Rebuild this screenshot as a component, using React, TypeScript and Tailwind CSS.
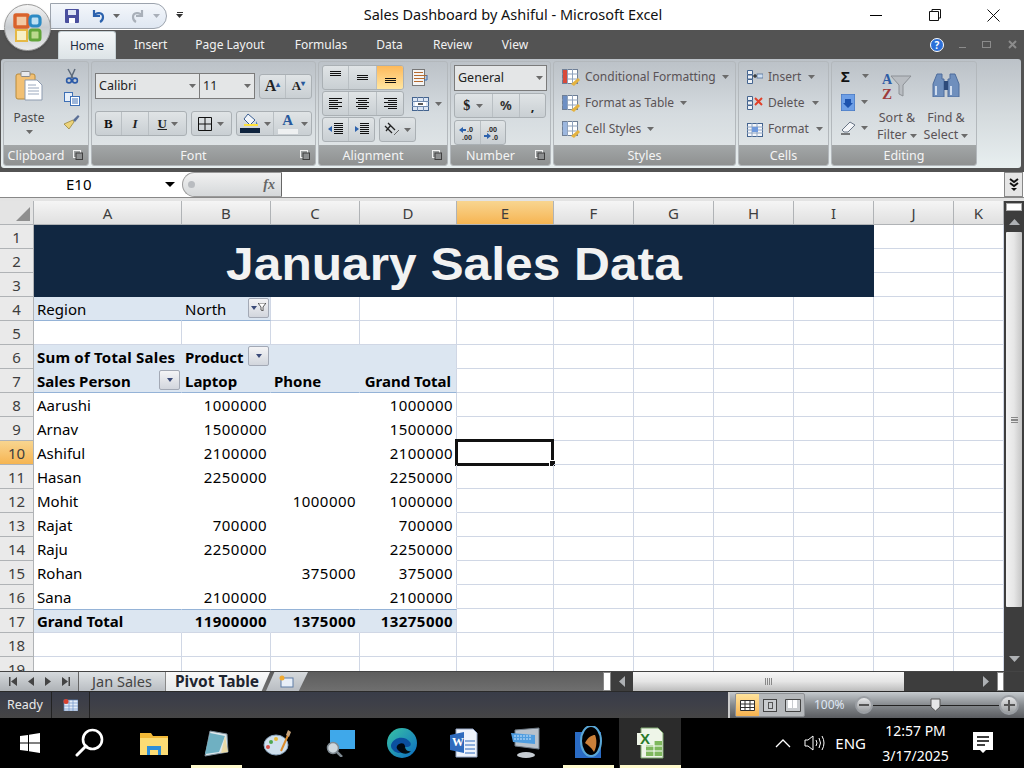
import React from "react";

const Caret = ({ c = "#6b6b6b", className = "" }: { c?: string; className?: string }) => (
  <svg width="7" height="4" viewBox="0 0 7 4" className={className}><path d="M0 0h7L3.5 4z" fill={c} /></svg>
);

const Launcher = () => (
  <svg width="10" height="10" viewBox="0 0 10 10" className="shrink-0">
    <rect x="0.5" y="0.5" width="7" height="7" fill="none" stroke="#f2f2f2" />
    <rect x="3" y="3" width="6.5" height="6.5" fill="#8d8f90" stroke="#3f3f3f" strokeWidth="1" />
  </svg>
);

const Group = ({ w, label, launcher, children }: { w: string; label: string; launcher?: boolean; children: React.ReactNode }) => (
  <div className={`${w} h-[105px] shrink-0 flex flex-col rounded-[3px] border border-[#b3b8bc] bg-gradient-to-b from-[#bcc2c8] via-[#d5dbdf] to-[#e4e9ea] overflow-hidden`}>
    <div className="flex-1 min-h-0 relative">{children}</div>
    <div className="h-[20px] shrink-0 bg-gradient-to-b from-[#a3a7a8] to-[#8f9191] flex items-center text-[#f4f4f4] text-[12.5px] relative pt-[2px]">
      <span className={`flex-1 text-center ${launcher ? "pr-[20px]" : ""}`}>{label}</span>
      {launcher && <span className="absolute right-[5px] top-[5px]"><Launcher /></span>}
    </div>
  </div>
);

const BtnRow = ({ children, className = "" }: { children: React.ReactNode; className?: string }) => (
  <div className={`flex h-[25px] rounded-[3px] border border-[#aab0b4] bg-gradient-to-b from-[#e0e4e6] to-[#c9cfd3] overflow-hidden ${className}`}>{children}</div>
);
const Seg = ({ w, children, active }: { w: string; children?: React.ReactNode; active?: boolean }) => (
  <div className={`${w} flex items-center justify-center border-r border-[#b9bfc3] last:border-r-0 ${active ? "bg-gradient-to-b from-[#fdb95a] to-[#ffe6a0]" : ""}`}>{children}</div>
);

const HL = ({ w, x, y }: { w: number[]; x: (n: number) => number; y: number }) => (
  <svg width="15" height="13" viewBox="0 0 15 13">
    {w.map((n, i) => <rect key={i} x={Math.floor(x(n))} y={y + i * 2} width={n} height="1" fill="#111" />)}
  </svg>
);

const Cut = () => (
  <svg width="14" height="16" viewBox="0 0 14 16"><path d="M3 1l5 9M10 1L6 10" stroke="#5d6a7a" strokeWidth="1.5" fill="none" /><circle cx="4" cy="12.5" r="2.4" fill="none" stroke="#2b5aa8" strokeWidth="1.6" /><circle cx="10" cy="12.5" r="2.4" fill="none" stroke="#2b5aa8" strokeWidth="1.6" /></svg>
);
const CopyI = () => (
  <svg width="16" height="14" viewBox="0 0 16 14"><rect x="0.5" y="0.5" width="8" height="9" fill="#e8f0fa" stroke="#3d6fb5" /><rect x="6.5" y="4.5" width="9" height="9" fill="#fff" stroke="#3d6fb5" /><path d="M8 7h6M8 9h6M8 11h6" stroke="#3d6fb5" /></svg>
);
const Brush = () => (
  <svg width="17" height="16" viewBox="0 0 17 16"><path d="M10 6L1 10l5 5 5-7z" fill="#ecd37a" stroke="#8f7b30" strokeWidth=".7" /><path d="M10 6l5-5 1.500 1.500L12 8z" fill="#5a6f96" /></svg>
);
const PasteI = () => (
  <svg width="28" height="32" viewBox="0 0 28 32">
    <rect x="1" y="3" width="19" height="25" rx="2" fill="#f2c073" stroke="#b88a3a" />
    <rect x="6" y="0.5" width="9" height="5" rx="1" fill="#e8eaee" stroke="#8a8a8a" />
    <path d="M10 9h12l5 5v15H10z" fill="#fff" stroke="#8d9bb0" />
    <path d="M13 14h8M13 17h11M13 20h11M13 23h11" stroke="#9aa8bd" />
  </svg>
);
const Borders = () => (
  <svg width="14" height="14" viewBox="0 0 14 14"><path d="M.5.5h13v13H.5zM7 .5v13M.5 7h13" fill="none" stroke="#111" /></svg>
);
const Fill = () => (
  <svg width="21" height="21" viewBox="0 0 21 21"><path d="M8 1l7 6-5 5-6-6z" fill="#f2f6fb" stroke="#3c5f92" /><path d="M16 8c1 2 2 3 1.500 4s-2 0-1.500-4z" fill="#4a7ec0" /><rect x="4" y="11" width="14" height="2" fill="#ffe33b" /><rect x="0" y="15" width="20" height="5" fill="#0f243e" /></svg>
);
const FontColor = () => (
  <div className="flex flex-col items-center leading-none">
    <span className="text-[#27589b] font-bold text-[15px] leading-[14px] [font-family:'Liberation_Serif',serif]">A</span>
    <span className="w-[20px] h-[5px] bg-[#eef0f1] mt-[2px]" />
  </div>
);

const Sheet = ({ c }: { c: string }) => (
  <svg width="19" height="17" viewBox="0 0 19 17">
    <rect x="0.5" y="0.5" width="15" height="14" fill="#fff" stroke="#6f7f96" />
    <path d="M0 5h16M0 10h16M5.500 0v15M10.500 0v15" stroke="#8fa2bc" />
    <rect x="1" y="1" width="4" height="13" fill={c} />
    <path d="M9 15l7-6 2 2-6 6z" fill="#e4b23f" />
  </svg>
);

const TabLabel = ({ children, w }: { children: string; w: string }) => <div className={`${w} text-center text-[#f2f2f2] text-[12px] leading-[29px]`}>{children}</div>;

const COLS = "grid-cols-[34px_148px_89px_89px_97px_97px_80px_80px_80px_80px_80px_50px]";
const letters = ["A", "B", "C", "D", "E", "F", "G", "H", "I", "J", "K"];

type R = { n: number; a?: string; b?: string; c?: string; d?: string };
const rows: R[] = [
  { n: 8, a: "Aarushi", b: "1000000", d: "1000000" },
  { n: 9, a: "Arnav", b: "1500000", d: "1500000" },
  { n: 10, a: "Ashiful", b: "2100000", d: "2100000" },
  { n: 11, a: "Hasan", b: "2250000", d: "2250000" },
  { n: 12, a: "Mohit", c: "1000000", d: "1000000" },
  { n: 13, a: "Rajat", b: "700000", d: "700000" },
  { n: 14, a: "Raju", b: "2250000", d: "2250000" },
  { n: 15, a: "Rohan", c: "375000", d: "375000" },
  { n: 16, a: "Sana", b: "2100000", d: "2100000" },
];

const Cell = ({ children, className = "", right }: { children?: React.ReactNode; className?: string; right?: boolean }) => (
  <div className={`relative min-w-0 h-[24px] border-r border-b border-[#d0d7e5] px-[3px] text-[15px] leading-[25px] whitespace-nowrap text-black ${right ? "text-right tracking-[0.45px]" : ""} ${className}`}>{children}</div>
);
const Head = ({ n, active }: { n: number; active?: boolean }) => (
  <div className={`h-[24px] border-r border-b border-[#b0b3b6] text-center text-[15px] leading-[25px] text-[#3e3e3e] ${active ? "bg-gradient-to-b from-[#f8d58f] to-[#f6b551]" : "bg-[#eaeaea]"}`}>{n}</div>
);
const Blanks = ({ n }: { n: number }) => <>{Array.from({ length: n }).map((_, i) => <Cell key={i} />)}</>;

const DropBtn = ({ filter }: { filter?: boolean }) => (
  <span className="absolute right-[1px] top-[1px] w-[21px] h-[20px] rounded-[2px] border border-[#a3a9b5] bg-gradient-to-b from-[#f4f4f6] to-[#d2d6dd] flex items-center justify-center gap-[1px]">
    <svg width="6" height="4" viewBox="0 0 6 4"><path d="M0 0h6L3 4z" fill="#3b4a78" /></svg>
    {filter && <svg width="8" height="8" viewBox="0 0 8 8" className="-mt-[3px]"><path d="M0 0h8L5 4v4L3 7V4z" fill="#fff" stroke="#333" strokeWidth=".8" /></svg>}
  </span>
);

const Under = ({ w = "w-[62px]", active, children }: { w?: string; active?: boolean; children: React.ReactNode }) => (
  <div className={`${w} h-[50px] shrink-0 flex items-center justify-center relative ${active ? "bg-[#2b2b2b]" : ""}`}>
    {children}
  </div>
);

export default function App() {
  return (
    <div className="w-[1024px] h-[768px] overflow-hidden flex flex-col bg-[#535353] [font-family:'Noto_Sans',sans-serif]">
      {/* Title bar */}
      <div className="h-[30px] bg-white flex items-center shrink-0 relative">
        <div className="ml-[50px] w-[117px] h-[26px] mt-[2px] rounded-r-[13px] border border-[#9ca3ad] bg-gradient-to-b from-[#f4f7fb] to-[#dfe7f2] flex items-center pl-[14px] gap-[8px]">
          <svg width="14" height="14" viewBox="0 0 14 14"><rect width="14" height="14" rx="1" fill="#4a4f9e" /><rect x="3" y="1" width="8" height="5" fill="#dfe5f5" /><rect x="4" y="9" width="6" height="5" fill="#fff" /></svg>
          <svg width="14" height="14" viewBox="0 0 14 14" className="ml-[4px]"><path d="M3 1v6h6M3 7c2-4 9-4 9 1 0 2-1 4-3 5" fill="none" stroke="#2c62ad" strokeWidth="2.200" /></svg>
          <Caret c="#666" />
          <svg width="14" height="14" viewBox="0 0 14 14" className="ml-[3px]"><path d="M11 1v6H5M11 7C9 3 2 3 2 8c0 2 1 4 3 5" fill="none" stroke="#a9b0b9" strokeWidth="2.200" /></svg>
          <Caret c="#a9afb8" />
        </div>
        <div className="ml-[9px] flex flex-col items-center gap-[1px]"><span className="w-[6px] h-[1px] bg-[#333]" /><Caret c="#333" /></div>
        <div className="flex-1 text-center text-[14.5px] text-[#111] -ml-[4px] whitespace-nowrap">Sales Dashboard by Ashiful - Microsoft Excel</div>
        <div className="flex items-center shrink-0">
          <div className="w-[58px] flex justify-center"><span className="w-[12px] h-[1px] bg-black" /></div>
          <div className="w-[59px] flex justify-center">
            <svg width="12" height="12" viewBox="0 0 12 12"><path d="M3 2.500V.5h8.500V9H9.500M.5 2.500h9v9h-9z" fill="none" stroke="#111" /></svg>
          </div>
          <div className="w-[58px] flex justify-center mr-[2px]">
            <svg width="13" height="13" viewBox="0 0 13 13"><path d="M.5.5l12 12M12.500.5l-12 12" stroke="#111" /></svg>
          </div>
        </div>
        {/* Office button */}
        <div className="absolute left-[4px] top-[4px] w-[47px] h-[47px] rounded-full bg-gradient-to-b from-[#f5f5f5] via-[#c8ccd0] to-[#e9e9e9] border border-[#9a9a9a] flex items-center justify-center z-10 shadow">
          <svg width="30" height="30" viewBox="0 0 30 30">
            <rect x="2" y="2" width="13" height="12" rx="1" fill="#f3c9a3" stroke="#d9622b" strokeWidth="3.400" />
            <rect x="17" y="3" width="10" height="10" rx="3" fill="#bfe0f2" stroke="#2c8ac4" strokeWidth="3.200" />
            <rect x="3" y="17" width="11" height="11" fill="#f7f0c6" stroke="#e6b844" strokeWidth="2" />
            <rect x="17" y="17" width="10" height="10" rx="2" fill="#bcd98e" stroke="#62a53a" strokeWidth="3" />
          </svg>
        </div>
      </div>

      {/* Ribbon tabs */}
      <div className="h-[29px] shrink-0 bg-[#535353] flex items-end pl-[58px] relative">
        <div className="w-[58px] h-[28px] rounded-t-[3px] bg-gradient-to-b from-[#f4f7f8] to-[#dde4e7] text-center text-[12px] leading-[28px] text-[#1c2a40] border border-b-0 border-[#c5d0d4]">Home</div>
        <div className="flex h-[29px]">
          <TabLabel w="w-[33px] ml-[18px]">Insert</TabLabel>
          <TabLabel w="w-[72px] ml-[27px]">Page Layout</TabLabel>
          <TabLabel w="w-[54px] ml-[28px]">Formulas</TabLabel>
          <TabLabel w="w-[27px] ml-[28px]">Data</TabLabel>
          <TabLabel w="w-[41px] ml-[29px]">Review</TabLabel>
          <TabLabel w="w-[28px] ml-[28px]">View</TabLabel>
        </div>
        <div className="ml-auto flex items-center h-full gap-[13px] pr-[7px]">
          <span className="w-[14px] h-[14px] rounded-full bg-[#2c6fd8] border border-white text-white text-[10px] font-bold leading-[12px] text-center">?</span>
          <span className="w-[7px] h-[1px] bg-[#8c8c8c] mt-[6px] ml-[2px]" />
          <span className="w-[9px] h-[7px] border border-[#8c8c8c] ml-[3px]" />
          <svg width="9" height="9" viewBox="0 0 9 9" className="ml-[4px]"><path d="M1 1l7 7M8 1L1 8" stroke="#8c8c8c" strokeWidth="2" /></svg>
        </div>
      </div>

      {/* Ribbon */}
      <div className="h-[109px] shrink-0 bg-gradient-to-b from-[#bcc2c8] via-[#d4dadd] to-[#e8eff0] ml-[1px] mr-[3px] rounded-[3px] pt-[2px] pl-[2px] flex gap-[2px]">
        <Group w="w-[86px]" label="Clipboard" launcher>
          <div className="flex h-full">
            <div className="w-[50px] flex flex-col items-center pt-[9px]">
              <PasteI />
              <span className="text-[12px] text-[#4a4a4a] mt-[7px] leading-[16px]">Paste</span>
              <Caret className="mt-[4px]" />
            </div>
            <div className="flex-1 flex flex-col items-center gap-[8px] pt-[6px] pl-[1px]">
              <Cut /><CopyI /><Brush />
            </div>
          </div>
        </Group>
        <Group w="w-[225px]" label="Font" launcher>
          <div className="px-[3px] pt-[11px] flex flex-col gap-[12px]">
            <div className="flex items-center">
              <div className="w-[105px] h-[26px] border border-[#7b7b7b] bg-[#e4e6e7] flex items-center justify-between px-[3px] text-[12.5px] text-[#222]">Calibri<Caret /></div>
              <div className="w-[55px] h-[26px] border border-l-0 border-[#7b7b7b] bg-[#e4e6e7] flex items-center justify-between px-[3px] text-[12.5px] text-[#222]">11<Caret /></div>
              <BtnRow className="ml-[4px]">
                <Seg w="w-[26px]"><span className="[font-family:'Liberation_Serif',serif] font-bold text-[16px] text-[#222]">A<sup className="text-[#27589b] text-[8px]">▴</sup></span></Seg>
                <Seg w="w-[25px]"><span className="[font-family:'Liberation_Serif',serif] font-bold text-[13px] text-[#222]">A<sup className="text-[#27589b] text-[8px]">▾</sup></span></Seg>
              </BtnRow>
            </div>
            <div className="flex items-center gap-[4px]">
              <BtnRow>
                <Seg w="w-[26px]"><span className="[font-family:'Liberation_Serif',serif] font-bold text-[13px] text-[#111]">B</span></Seg>
                <Seg w="w-[28px]"><span className="[font-family:'Liberation_Serif',serif] font-bold italic text-[13px] text-[#222]">I</span></Seg>
                <Seg w="w-[37px]"><span className="[font-family:'Liberation_Serif',serif] font-bold underline text-[13px] text-[#222] mr-[4px]">U</span><Caret /></Seg>
              </BtnRow>
              <BtnRow><Seg w="w-[39px]"><div className="flex items-center gap-[5px]"><Borders /><Caret /></div></Seg></BtnRow>
              <BtnRow>
                <Seg w="w-[38px]"><div className="flex items-center gap-[3px]"><Fill /><Caret /></div></Seg>
                <Seg w="w-[37px]"><div className="flex items-center gap-[3px]"><FontColor /><Caret /></div></Seg>
              </BtnRow>
            </div>
          </div>
        </Group>
        <Group w="w-[130px]" label="Alignment" launcher>
          <div className="pl-[3px] pt-[3px] flex flex-col gap-[1px]">
            <div className="flex items-center gap-[8px]">
              <BtnRow>
                <Seg w="w-[26px]"><HL w={[11, 11, 11]} x={() => 2} y={0} /></Seg>
                <Seg w="w-[28px]"><HL w={[11, 11, 11]} x={() => 2} y={4} /></Seg>
                <Seg w="w-[26px]" active><HL w={[11, 11, 11]} x={() => 2} y={7} /></Seg>
              </BtnRow>
              <svg width="17" height="17" viewBox="0 0 17 17"><rect x=".5" y=".5" width="12" height="16" fill="#f4f4f4" stroke="#777" /><path d="M2 3.500h9M2 6.500h13M2 9.500h11M2 12.500h9" stroke="#b66a2e" /><path d="M15 6v5h-3" fill="none" stroke="#3b6fb5" /></svg>
            </div>
            <div className="flex items-center gap-[8px]">
              <BtnRow>
                <Seg w="w-[26px]"><HL w={[13, 9, 13, 9, 13, 9]} x={() => 1} y={1} /></Seg>
                <Seg w="w-[28px]"><HL w={[13, 9, 13, 9, 13, 9]} x={(n) => (15 - n) / 2} y={1} /></Seg>
                <Seg w="w-[26px]"><HL w={[13, 9, 13, 9, 13, 9]} x={(n) => 14 - n} y={1} /></Seg>
              </BtnRow>
              <div className="flex items-center gap-[6px]">
                <svg width="17" height="14" viewBox="0 0 17 14"><rect x=".5" y=".5" width="16" height="13" fill="#dbe5f3" stroke="#44648f" /><path d="M0 4.500h17M0 9.500h17M5.500 0v4M11.500 0v4M5.500 9v5M11.500 9v5" stroke="#6f89ad" /><rect x="3" y="5" width="11" height="4" fill="#fff" /><path d="M6 7h5" stroke="#222" strokeWidth="1.500" /></svg>
                <Caret />
              </div>
            </div>
            <div className="flex items-center gap-[4px]">
              <BtnRow>
                <Seg w="w-[26px]"><svg width="15" height="13" viewBox="0 0 15 13"><path d="M6 .5h9M6 2.500h9M6 4.500h9M6 6.500h9M6 8.500h9M6 10.500h9" stroke="#111" /><path d="M0 6l4-3v6z" fill="#2c62ad" /></svg></Seg>
                <Seg w="w-[25px]"><svg width="15" height="13" viewBox="0 0 15 13"><path d="M6 .5h9M6 2.500h9M6 4.500h9M6 6.500h9M6 8.500h9M6 10.500h9" stroke="#111" /><path d="M5 6L1 3v6z" fill="#2c62ad" /></svg></Seg>
              </BtnRow>
              <BtnRow><Seg w="w-[35px]"><div className="flex items-center gap-[4px]"><svg width="16" height="15" viewBox="0 0 16 15"><path d="M1 4l7 7M4 1l7 7M2 9l5-6" stroke="#222" strokeWidth="1.300" /><path d="M10 13l5-5" stroke="#666" /></svg><Caret /></div></Seg></BtnRow>
            </div>
          </div>
        </Group>
        <Group w="w-[101px]" label="Number" launcher>
          <div className="pl-[3px] pt-[3px] flex flex-col gap-[2px]">
            <div className="w-[93px] h-[26px] border border-[#7b7b7b] bg-[#e4e6e7] flex items-center justify-between px-[3px] text-[12.5px] text-[#222]">General<Caret /></div>
            <BtnRow className="w-[92px]">
              <Seg w="w-[38px]"><span className="text-[14px] font-bold text-[#222] [font-family:'Liberation_Serif',serif] mr-[6px]">$</span><Caret /></Seg>
              <Seg w="w-[28px]"><span className="text-[13px] font-bold text-[#333]">%</span></Seg>
              <Seg w="w-[25px]"><span className="text-[13px] font-bold text-[#222] leading-[10px]">,</span></Seg>
            </BtnRow>
            <BtnRow className="w-[52px]">
              <Seg w="w-[26px]"><svg width="17" height="16" viewBox="0 0 17 16"><path d="M0 5l4-3v2h3v2H4v2z" fill="#2c62ad" /><text x="8" y="7" fontSize="7" fontWeight="bold" fill="#333">.0</text><text x="3" y="15" fontSize="7" fontWeight="bold" fill="#333">.00</text></svg></Seg>
              <Seg w="w-[25px]"><svg width="17" height="16" viewBox="0 0 17 16"><text x="3" y="7" fontSize="7" fontWeight="bold" fill="#333">.00</text><path d="M0 10h3V8l4 3-4 3v-2H0z" fill="#2c62ad" /><text x="8" y="15" fontSize="7" fontWeight="bold" fill="#333">.0</text></svg></Seg>
            </BtnRow>
          </div>
        </Group>
        <Group w="w-[183px]" label="Styles">
          <div className="pl-[8px] pt-[2px] flex flex-col text-[12px] text-[#5a5356]">
            {[["Conditional Formatting", "#d84a3a"], ["Format as Table", "#6d8fc4"], ["Cell Styles", "#9cb7df"]].map(([t, c]) => (
              <div key={t} className="h-[26px] flex items-center gap-[3px]">
                <Sheet c={c} /><span className="ml-[1px]">{t}</span><Caret className="ml-[3px]" />
              </div>
            ))}
          </div>
        </Group>
        <Group w="w-[91px]" label="Cells">
          <div className="pl-[8px] pt-[2px] flex flex-col text-[12px] text-[#5a5356]">
            {[
              ["Insert", <svg key="i" width="16" height="14" viewBox="0 0 16 14"><path d="M.5.5h5v4h-5zM.5 5h5v4h-5zM.5 9.500h5v4h-5z" fill="#eef2f7" stroke="#44648f" /><rect x="10" y="4" width="6" height="4" fill="#cfe0f4" stroke="#44648f" strokeWidth=".7" /><path d="M6 6h4M8 4v4" stroke="#111" /></svg>],
              ["Delete", <svg key="d" width="16" height="14" viewBox="0 0 16 14"><path d="M.5.5h5v4h-5zM.5 5h5v4h-5zM.5 9.500h5v4h-5z" fill="#eef2f7" stroke="#44648f" /><path d="M8 2l7 7M15 2L8 9" stroke="#e0402a" strokeWidth="2" /></svg>],
              ["Format", <svg key="f" width="16" height="16" viewBox="0 0 16 16"><rect x=".5" y="2.500" width="15" height="13" fill="#f5f7fb" stroke="#44648f" /><path d="M0 6h16M0 9h16M0 12h16M5 2v14M10 2v14" stroke="#8ea4c2" /><rect x="5" y="6" width="6" height="5" fill="#6f9ade" /></svg>],
            ].map(([t, ic]) => (
              <div key={t as string} className="h-[26px] flex items-center gap-[5px]">
                <span className="w-[16px] flex justify-center">{ic}</span><span>{t}</span><Caret className="ml-[2px]" />
              </div>
            ))}
          </div>
        </Group>
        <Group w="w-[146px]" label="Editing">
          <div className="flex h-full text-[12.5px] text-[#5a5356]">
            <div className="w-[40px] shrink-0 pt-[1px] pl-[9px] flex flex-col">
              <div className="h-[26px] flex items-center gap-[8px]"><span className="text-[15px] font-bold text-[#111] leading-none w-[13px]">Σ</span><Caret /></div>
              <div className="h-[26px] flex items-center gap-[6px]"><svg width="14" height="17" viewBox="0 0 14 17"><rect width="14" height="17" fill="#6e9fe6" stroke="#3e6cb4" /><path d="M4 5h6v4h2l-5 5-5-5h2z" fill="#1d53ae" /></svg><Caret /></div>
              <div className="h-[26px] flex items-center gap-[5px]"><svg width="15" height="14" viewBox="0 0 15 14"><path d="M1 9l8-8 5 3-7 7H3z" fill="#f3f5f8" stroke="#6a7687" /><path d="M0 13h9" stroke="#111" /></svg><Caret /></div>
            </div>
            <div className="w-[50px] shrink-0 flex flex-col items-center pt-[9px]">
              <svg width="32" height="30" viewBox="0 0 32 30">
                <text x="1" y="13" fontSize="14" fontWeight="bold" fill="#2f5da5" fontFamily="Liberation Serif">A</text>
                <text x="1" y="28" fontSize="15" fontWeight="bold" fill="#9d3b3b" fontFamily="Liberation Serif">Z</text>
                <path d="M10 5h20l-8 9v11l-4-2v-9z" fill="#b9bdc2" stroke="#8d9196" />
              </svg>
              <div className="text-center leading-[17px] mt-[8px] whitespace-nowrap">Sort &amp;<br />Filter <Caret className="inline align-middle" /></div>
            </div>
            <div className="w-[48px] shrink-0 flex flex-col items-center pt-[10px]">
              <svg width="28" height="25" viewBox="0 0 28 25">
                <path d="M5 2h5v5h2v18H1V12zM18 2h5l4 10v13H16V7h2z" fill="#6f8fbd" stroke="#4e6d9c" />
                <rect x="12" y="9" width="4" height="9" fill="#2d4a7a" />
                <path d="M4 14v9M19 14v9" stroke="#cfdcee" strokeWidth="2" />
              </svg>
              <div className="text-center leading-[17px] mt-[12px] whitespace-nowrap">Find &amp;<br />Select <Caret className="inline align-middle" /></div>
            </div>
          </div>
        </Group>
      </div>

      {/* Formula bar */}
      <div className="h-[26px] shrink-0 mt-[4px] bg-white border-b border-[#888] flex items-stretch">
        <div className="w-[182px] flex items-center text-[15px] text-black relative">
          <span className="ml-[66px]">E10</span>
          <svg width="10" height="5" viewBox="0 0 10 5" className="absolute left-[165px] top-[10px]"><path d="M0 0h10L5 5z" fill="#000" /></svg>
        </div>
        <div className="w-[100px] rounded-l-[13px] border border-[#9a9a9a] border-r-[#666] bg-gradient-to-b from-[#f1f1f1] to-[#d5d8da] flex items-center justify-between pl-[5px] pr-[6px]">
          <span className="w-[7px] h-[7px] rounded-full bg-[#b9bcc0]" />
          <span className="[font-family:'Liberation_Serif',serif] italic font-bold text-[14px] text-[#666]">fx</span>
        </div>
        <div className="flex-1" />
        <div className="w-[19px] mr-[1px] bg-[#e5e5e5] border border-[#888] flex items-center justify-center">
          <svg width="10" height="14" viewBox="0 0 10 14"><path d="M1 1l4 3 4-3M1 5l4 3 4-3" fill="none" stroke="#111" strokeWidth="2" /><path d="M2 10h6l-3 3z" fill="#111" /></svg>
        </div>
      </div>

      {/* Sheet */}
      <div className="h-[473px] shrink-0 flex bg-white border-t-[3px] border-[#e3e3e3]">
        <div className="w-[1004px] h-[470px] overflow-hidden shrink-0">
          <div className={`grid ${COLS} auto-rows-[24px]`}>
            <div className="h-[24px] bg-[#e4e4e4] border-r border-b border-[#b0b3b6] flex items-end justify-end p-[3px]">
              <svg width="14" height="14" viewBox="0 0 14 14"><path d="M14 0v14H0z" fill="#8f8f8f" /></svg>
            </div>
            {letters.map((l) => (
              <div key={l} className={`h-[24px] border-r border-b border-[#b0b3b6] text-center text-[15px] leading-[25px] text-[#3e3e3e] ${l === "E" ? "bg-gradient-to-b from-[#f8d58f] to-[#f6b551]" : "bg-gradient-to-b from-[#f5f5f5] to-[#e0e0e0]"}`}>{l}</div>
            ))}

            {/* 1-3 */}
            <Head n={1} />
            <div className="col-span-9 row-span-3 bg-[#112741] flex items-center justify-center text-[#f2f2f2] font-bold text-[46px] [font-family:'Liberation_Sans',sans-serif] leading-none pt-[6px] overflow-hidden">
              <span className="inline-block scale-x-[1.08] whitespace-nowrap">January Sales Data</span>
            </div>
            <Cell /><Cell />
            <Head n={2} /><Cell /><Cell />
            <Head n={3} /><Cell /><Cell />

            {/* 4 */}
            <Head n={4} />
            <Cell className="bg-[#dce6f1] !border-r-[#dce6f1] !border-b-[#95b3d7]">Region</Cell>
            <Cell className="bg-[#dce6f1] !border-b-[#95b3d7]">North<DropBtn filter /></Cell>
            <Blanks n={9} />

            {/* 5 */}
            <Head n={5} /><Blanks n={11} />

            {/* 6 */}
            <Head n={6} />
            <Cell className="bg-[#dce6f1] !border-[#dce6f1] font-bold tracking-[0.2px]">Sum of Total Sales</Cell>
            <Cell className="bg-[#dce6f1] !border-[#dce6f1] font-bold">Product<DropBtn /></Cell>
            <Cell className="bg-[#dce6f1] !border-[#dce6f1]" />
            <Cell className="bg-[#dce6f1] !border-b-[#dce6f1]" />
            <Blanks n={7} />

            {/* 7 */}
            <Head n={7} />
            <Cell className="bg-[#dce6f1] !border-r-[#dce6f1] !border-b-[#95b3d7] font-bold">Sales Person<DropBtn /></Cell>
            <Cell className="bg-[#dce6f1] !border-r-[#dce6f1] !border-b-[#95b3d7] font-bold">Laptop</Cell>
            <Cell className="bg-[#dce6f1] !border-r-[#dce6f1] !border-b-[#95b3d7] font-bold">Phone</Cell>
            <Cell className="bg-[#dce6f1] !border-b-[#95b3d7] font-bold !pr-[5px] !tracking-normal" right>Grand Total</Cell>
            <Blanks n={7} />

            {rows.map((r) => (
              <React.Fragment key={r.n}>
                <Head n={r.n} active={r.n === 10} />
                <Cell className="!border-r-white !border-b-white">{r.a}</Cell>
                <Cell right className="!border-r-white !border-b-white">{r.b}</Cell>
                <Cell right className="!border-r-white !border-b-white">{r.c}</Cell>
                <Cell right className="!border-b-white">{r.d}</Cell>
                {r.n === 10 ? (
                  <Cell>
                    <span className="absolute -left-[2px] -top-[2px] w-[99px] h-[27px] border-[3px] border-[#111]" />
                    <span className="absolute -right-[3px] -bottom-[3px] w-[5px] h-[5px] bg-[#111] border border-white box-content" />
                  </Cell>
                ) : <Cell />}
                <Blanks n={6} />
              </React.Fragment>
            ))}

            {/* 17 */}
            <Head n={17} />
            <Cell className="bg-[#dce6f1] !border-r-[#dce6f1] border-t border-t-[#95b3d7] !leading-[22px] font-bold">Grand Total</Cell>
            <Cell right className="bg-[#dce6f1] !border-r-[#dce6f1] border-t border-t-[#95b3d7] !leading-[22px] font-bold">11900000</Cell>
            <Cell right className="bg-[#dce6f1] !border-r-[#dce6f1] border-t border-t-[#95b3d7] !leading-[22px] font-bold">1375000</Cell>
            <Cell right className="bg-[#dce6f1] border-t border-t-[#95b3d7] !leading-[22px] font-bold">13275000</Cell>
            <Blanks n={7} />

            <Head n={18} /><Blanks n={11} />
            <Head n={19} /><Blanks n={11} />
          </div>
        </div>
        {/* Vertical scrollbar */}
        <div className="w-[20px] h-[470px] shrink-0 bg-[#3d3d3d] flex flex-col items-center">
          <div className="w-[16px] h-[8px] mt-[2px] border border-[#aaa] bg-white shrink-0" />
          <div className="h-[21px] shrink-0 flex items-center justify-center">
            <svg width="11" height="6" viewBox="0 0 11 6"><path d="M0 6h11L5.500 0z" fill="#aeb1b4" /></svg>
          </div>
          <div className="w-[16px] h-[375px] shrink-0 rounded-[1px] bg-gradient-to-r from-[#f2f2f2] via-[#e6e6e6] to-[#c5c5c5] flex items-center justify-center">
            <span className="w-[7px] h-[6px] border-y-[3px] border-double border-[#888]" />
          </div>
          <div className="flex-1 flex items-end pb-[9px]">
            <svg width="11" height="6" viewBox="0 0 11 6"><path d="M0 0h11L5.500 6z" fill="#aeb1b4" /></svg>
          </div>
        </div>
      </div>

      {/* Sheet tabs */}
      <div className="h-[20px] shrink-0 flex items-stretch bg-gradient-to-b from-[#5d5d5d] to-[#6f6f6f] border-t border-[#444] text-[14.5px]">
        <div className="w-[79px] bg-gradient-to-b from-[#d5d9dc] to-[#aeb2b6] flex items-center justify-around px-[3px] border-r border-[#666]">
          <svg width="8" height="9" viewBox="0 0 8 9"><path d="M0 0h1.500v9H0zM8 0v9L2 4.500z" fill="#444" /></svg>
          <svg width="6" height="9" viewBox="0 0 6 9"><path d="M6 0v9L0 4.500z" fill="#444" /></svg>
          <svg width="6" height="9" viewBox="0 0 6 9"><path d="M0 0v9l6-4.500z" fill="#444" /></svg>
          <svg width="8" height="9" viewBox="0 0 8 9"><path d="M0 0v9l6-4.500zM6.500 0H8v9H6.500z" fill="#444" /></svg>
        </div>
        <div className="w-[87px] bg-gradient-to-b from-[#dfe3e5] to-[#b9bdc2] text-center text-[#444] leading-[19px] border-r border-[#888]">Jan Sales</div>
        <div className="w-[104px] bg-gradient-to-b from-[#f9f9f9] to-[#e6e9eb] text-center font-bold text-[15.5px] text-[#1f2530] leading-[19px] pr-[2px] [clip-path:polygon(0_0,100%_0,92%_100%,0_100%)]">Pivot Table</div>
        <div className="w-[42px] -ml-[4px] bg-gradient-to-b from-[#d5d9dc] to-[#b9bdc2] flex items-center pl-[12px] [clip-path:polygon(20%_0,100%_0,78%_100%,0_100%)]">
          <svg width="16" height="14" viewBox="0 0 16 14"><rect x="3" y="3" width="12" height="9" fill="#e8eff8" stroke="#5e7ca6" /><circle cx="4" cy="3" r="2.500" fill="#f0a92f" /></svg>
        </div>
        <div className="flex-1" />
        <div className="w-[8px] bg-white border border-[#888] ml-auto" />
        <div className="w-[22px] bg-[#3d3d3d] flex items-center justify-center">
          <svg width="6" height="11" viewBox="0 0 6 11"><path d="M6 0v11L0 5.500z" fill="#aeb1b4" /></svg>
        </div>
        <div className="w-[271px] bg-gradient-to-b from-[#f7f7f7] via-[#e5e5e5] to-[#bcbcbc] flex items-center justify-center">
          <span className="w-[7px] h-[7px] border-x-[3px] border-double border-[#888]" />
        </div>
        <div className="w-[93px] bg-[#3d3d3d] flex items-center justify-end pr-[8px]">
          <svg width="6" height="11" viewBox="0 0 6 11"><path d="M0 0v11l6-5.500z" fill="#aeb1b4" /></svg>
        </div>
        <div className="w-[7px] bg-white border border-[#888]" />
        <div className="w-[20px] bg-[#3d3d3d]" />
      </div>

      {/* Status bar */}
      <div className="h-[27px] shrink-0 flex items-stretch bg-gradient-to-b from-[#383c48] via-[#3f4048] to-[#454545] border-t border-[#2a2a2a] text-[12.5px] text-[#e8e8e8]">
        <div className="w-[52px] pl-[7px] leading-[26px] border-r border-[#222]">Ready</div>
        <div className="w-[38px] flex items-center justify-center border-r border-[#222]">
          <svg width="15" height="12" viewBox="0 0 15 12"><rect x="1" y="1" width="14" height="11" fill="#e3ecf8" stroke="#5f83b8" strokeWidth=".7" /><path d="M1 4h14M1 7h14M1 10h14M6 1v11M10 1v11" stroke="#6f93c8" strokeWidth=".7" /><circle cx="3" cy="2.500" r="2.500" fill="#d9412f" /></svg>
        </div>
        <div className="flex-1" />
        <div className="w-[296px] border-l-[2px] border-[#ccc] flex items-center bg-gradient-to-b from-[#c6cbcf] via-[#868a8e] to-[#5a5c60] pl-[5px]">
          <div className="w-[70px] h-[24px] flex rounded-[2px] border border-[#8d9094] bg-[#b5b8bb] overflow-hidden">
            <div className="flex-1 bg-gradient-to-b from-[#ffe39b] to-[#f7b34f] flex items-center justify-center"><svg width="15" height="11" viewBox="0 0 15 11"><path d="M.5.500h14v10H.5zM0 4h15M0 7.500h15M5 0v11M10 0v11" fill="#fff" stroke="#2f2f2f" /></svg></div>
            <div className="flex-1 flex items-center justify-center"><span className="w-[14px] h-[13px] border border-[#444] bg-[#c9cccf] flex items-center justify-center"><span className="w-[5px] h-[7px] border border-[#555]" /></span></div>
            <div className="flex-1 flex items-center justify-center"><svg width="16" height="13" viewBox="0 0 16 13"><path d="M.5.500h15v12H.5z" fill="#c9cccf" stroke="#444" /><rect x="3" y="1" width="4" height="8" fill="#fff" /><rect x="8" y="1" width="4" height="8" fill="#fff" /></svg></div>
          </div>
          <span className="ml-[9px] text-[#dfe7f3] text-[12px] w-[32px]">100%</span>
          <span className="w-[18px] h-[18px] ml-[9px] rounded-full border-[2px] border-[#9a9ea3] bg-gradient-to-b from-[#e6e7e8] to-[#9a9da0] flex items-center justify-center shrink-0"><span className="w-[10px] h-[2px] bg-[#555]" /></span>
          <div className="flex-1 h-[1px] bg-[#222] relative">
            <svg width="11" height="14" viewBox="0 0 11 14" className="absolute left-[57px] -top-[7px]"><path d="M1 1h9v8l-4.500 4L1 9z" fill="#e6e7e8" stroke="#555" /></svg>
          </div>
          <span className="w-[20px] h-[20px] mr-[5px] rounded-full border-[2px] border-[#9a9ea3] bg-gradient-to-b from-[#e6e7e8] to-[#9a9da0] flex items-center justify-center relative shrink-0">
            <span className="w-[11px] h-[2px] bg-[#555]" /><span className="absolute w-[2px] h-[11px] bg-[#555]" />
          </span>
        </div>
      </div>

      {/* Taskbar */}
      <div className="h-[50px] shrink-0 bg-black flex items-center text-white relative">
        <Under w="w-[60px]"><svg width="20" height="20" viewBox="0 0 20 20"><path d="M0 3l8-1v7.500H0zM9 1.800L20 0v9.500H9zM0 10.500h8V18l-8-1zM9 10.500h11V20L9 18.200z" fill="#fff" /></svg></Under>
        <Under w="w-[60px]"><svg width="30" height="30" viewBox="0 0 30 30"><circle cx="17.500" cy="11.500" r="9.500" fill="none" stroke="#fff" strokeWidth="2.600" /><path d="M11 18L2 27" stroke="#fff" strokeWidth="3" strokeLinecap="round" /></svg></Under>
        <Under w="w-[62px] ml-[3px]"><svg width="28" height="24" viewBox="0 0 28 24"><path d="M0 2h11l2 3h15v19H0z" fill="#f2b937" /><path d="M0 7h28v17H0z" fill="#fcdc74" /><path d="M7 15h14v9h-3v-5h-8v5H7z" fill="#2e8fd8" /></svg></Under>
        <Under><svg width="28" height="28" viewBox="0 0 28 28"><path d="M8 2l17 3 1 18-23 4z" fill="#dfe8ec" stroke="#7a8a96" /><path d="M8 4l15 3-6 16-14 2z" fill="#6fb0c2" /><path d="M23 7l3 16-7 1z" fill="#e8d9a6" /></svg></Under>
        <Under><svg width="30" height="28" viewBox="0 0 30 28"><ellipse cx="13" cy="16" rx="12" ry="10" fill="#cfe0ee" stroke="#8aa4bb" /><circle cx="8" cy="13" r="2" fill="#4fa652" /><circle cx="13" cy="10" r="2" fill="#e7b93c" /><circle cx="5" cy="18" r="2" fill="#d5504a" /><path d="M18 22L26 4" stroke="#d98a2b" strokeWidth="2" /><path d="M25 1l3 2-2 5-3-2z" fill="#c6a27a" /></svg></Under>
        <Under><svg width="30" height="28" viewBox="0 0 30 28"><rect x="5" y="1" width="25" height="19" fill="#3fa8ea" /><circle cx="8" cy="19" r="5.500" fill="#cfd8de" stroke="#7f8a92" strokeWidth="1.500" /><path d="M12 23l5 5" stroke="#7f8a92" strokeWidth="2.500" /></svg></Under>
        <Under><svg width="30" height="30" viewBox="0 0 30 30"><defs><linearGradient id="eg" x1="0" y1="0" x2="1" y2="1"><stop offset="0" stopColor="#39c3a4" /><stop offset="1" stopColor="#0c6cc4" /></linearGradient></defs><circle cx="15" cy="15" r="15" fill="url(#eg)" /><path d="M4 17c2-8 14-10 19-3 2 3 0 5-4 5-3 0-3 1-1 3 2 3-8 5-12 0-2-2-2-3-2-5z" fill="#0b4f9e" /><path d="M10 18c2-3 7-4 8 0 0 3 2 6 6 5-3 4-9 3-12 0-2-2-3-3-2-5z" fill="#000" opacity=".9" /></svg></Under>
        <Under><svg width="28" height="30" viewBox="0 0 28 30"><path d="M6 1h17l4 4v24H6z" fill="#eef3fb" stroke="#93a5c4" /><path d="M0 7l14-3v21L0 22z" fill="#2f6bbd" /><text x="2" y="18" fontSize="12" fontWeight="bold" fill="#fff" fontFamily="Liberation Serif">W</text><path d="M15 13h10M15 17h10M15 21h10M15 25h10" stroke="#2f6bbd" /></svg></Under>
        <Under><svg width="30" height="32" viewBox="0 0 30 32"><path d="M4 3l24-2v21L4 19z" fill="#b8c2cc" stroke="#6f7a85" /><path d="M0 6l24 2v9L2 15z" fill="#4f9de0" /><path d="M3 9h18M3 12h18" stroke="#cfe6fb" strokeDasharray="2 1" /><ellipse cx="15" cy="28" rx="9" ry="3" fill="#c7cdd3" /></svg></Under>
        <Under><svg width="28" height="34" viewBox="0 0 28 34"><rect x="1" y="6" width="26" height="26" fill="#2a6bc4" /><ellipse cx="17" cy="15" rx="10" ry="15" fill="#000" stroke="#5aa7d6" strokeWidth="2" /><path d="M11 17c3-6 7-8 10-8 2 4 2 12-1 17-3-5-6-7-9-9z" fill="#c9803a" /></svg></Under>
        <Under active><svg width="28" height="32" viewBox="0 0 28 32"><path d="M5 1h17l5 5v25H5z" fill="#eef5e8" stroke="#7fa86f" /><path d="M10 14h16v15H10z" fill="#7fb85e" /><path d="M10 19h16M10 24h16M18 14v15" stroke="#fff" /><path d="M1 6l17 0v12L1 18z" fill="#eef5e8" /><text x="4" y="17" fontSize="15" fontWeight="bold" fill="#2a7a2a" fontFamily="Liberation Sans">X</text></svg></Under>
        <div className="flex-1 flex items-center justify-end h-full">
          <svg width="16" height="9" viewBox="0 0 16 9" className="mr-[13px]"><path d="M1 8l7-7 7 7" fill="none" stroke="#fff" strokeWidth="1.300" /></svg>
          <svg width="21" height="18" viewBox="0 0 21 18" className="mr-[10px]"><path d="M1 6h3l5-4v14l-5-4H1z" fill="none" stroke="#fff" /><path d="M12 6q2 3 0 6M15 4q3 5 0 10M18 2q4 7 0 14" fill="none" stroke="#fff" /></svg>
          <span className="text-[15px] mr-[12px]">ENG</span>
          <div className="text-center text-[14px] leading-[25px] w-[75px] mr-[20px]"><div>12:57 PM</div><div>3/17/2025</div></div>
          <svg width="20" height="22" viewBox="0 0 20 22" className="mr-[31px]"><path d="M0 0h20v18h-7l-3 3-3-3H0z" fill="#fff" /><path d="M4 5h12M4 9h12M4 13h8" stroke="#000" strokeWidth="1.500" /></svg>
        </div>
        <span className="absolute left-[191px] bottom-0 w-[51px] h-[3px] bg-[#fffacd]" />
        <span className="absolute left-[563px] bottom-0 w-[51px] h-[3px] bg-[#fffacd]" />
        <span className="absolute left-[620px] bottom-0 w-[61px] h-[3px] bg-[#fffacd]" />
      </div>
    </div>
  );
}
